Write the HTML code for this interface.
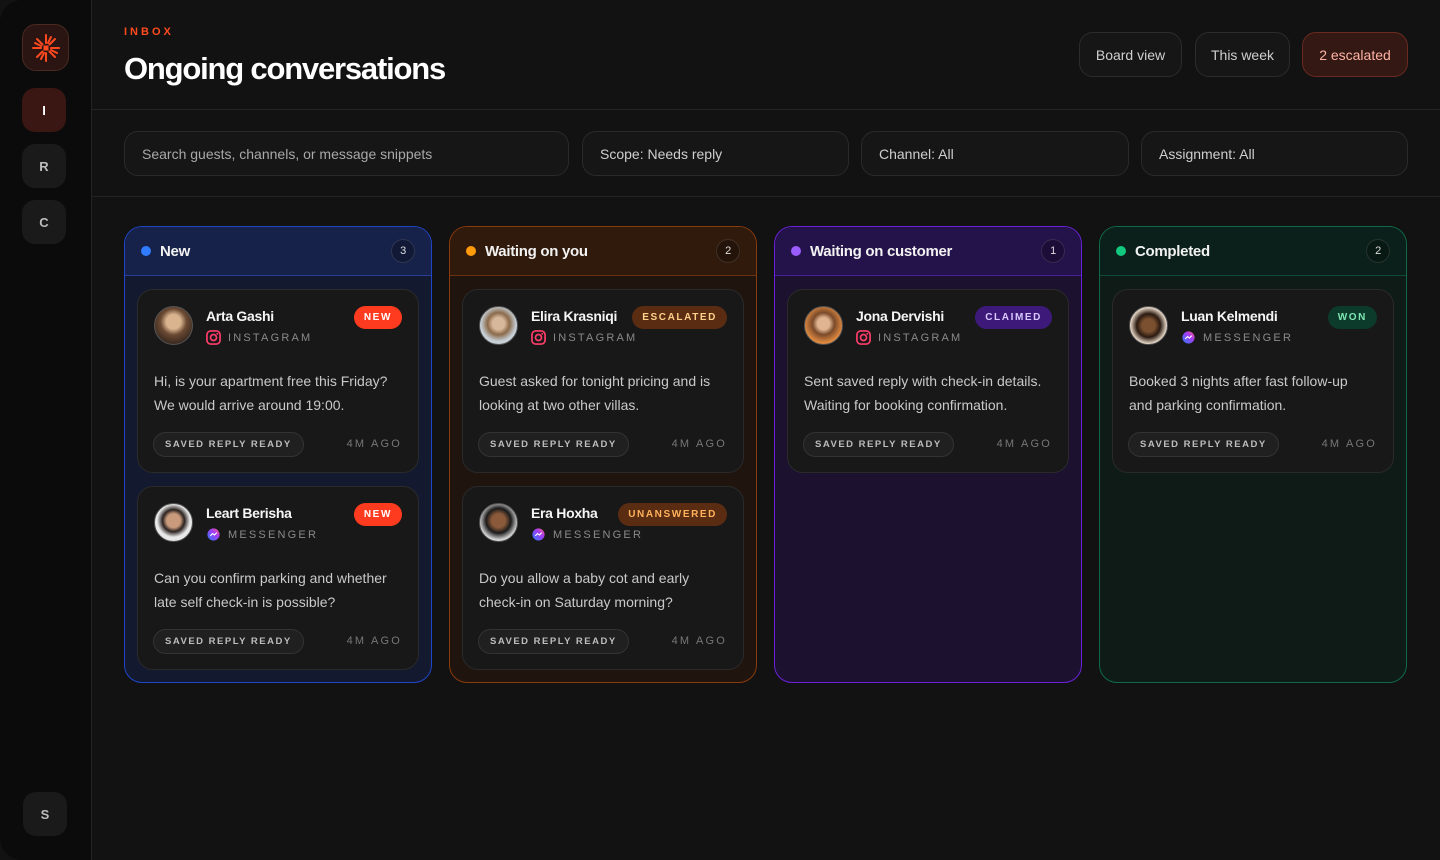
<!DOCTYPE html>
<html><head><meta charset="utf-8"><style>
*{box-sizing:border-box;margin:0;padding:0}
body{width:1440px;height:860px;background:#121212;font-family:"Liberation Sans",sans-serif;color:#f2f2f2;position:relative;overflow:hidden}
.side{position:absolute;left:0;top:0;width:92px;height:860px;background:#0b0b0b;border-right:1px solid #232323;border-radius:22px 0 0 22px}
.sb{position:absolute;left:22px;width:44px;height:44px;border-radius:13px;background:#1a1a1a;color:#bdbdbd;font-size:13px;font-weight:bold;display:flex;align-items:center;justify-content:center}
.logo{position:absolute;left:22px;top:24px;width:47px;height:47px;border-radius:14px;background:#2a1512;border:1px solid #4a2a22;display:flex;align-items:center;justify-content:center}
.kick{position:absolute;left:124px;top:26px;font-size:11px;letter-spacing:3px;color:#ff4a1f;font-weight:bold}
h1{position:absolute;left:124px;top:51px;font-size:31px;font-weight:bold;letter-spacing:-1.2px;color:#fff}
.btn{position:absolute;top:32px;height:45px;border-radius:14px;border:1px solid #2c2c2c;background:#161616;color:#cfcfcf;font-size:14px;display:flex;align-items:center;justify-content:center}
.hr{position:absolute;left:92px;right:0;height:1px;background:#242424}
.f{position:absolute;top:131px;height:45px;border-radius:14px;border:1px solid #2a2a2a;background:#161616;color:#cfcfcf;font-size:14px;display:flex;align-items:center;padding-left:17px}
.col{position:absolute;top:226px;width:308px;height:457px;border-radius:18px;border:1px solid}
.ch{height:49px;border-bottom:1px solid;display:flex;align-items:center;padding:0 16px;font-size:15px;font-weight:bold;letter-spacing:-0.3px;border-radius:17px 17px 0 0}
.dot{width:10px;height:10px;border-radius:50%;margin-right:9px}
.cnt{margin-left:auto;width:24px;height:24px;border-radius:50%;border:1px solid rgba(255,255,255,.12);background:rgba(0,0,0,.25);font-size:11px;font-weight:normal;display:flex;align-items:center;justify-content:center;color:#ddd}
.card{position:absolute;left:12px;width:282px;height:184px;border-radius:16px;background:#181818;border:1px solid #2a2a2a}
.av{position:absolute;left:16px;top:16px;width:39px;height:39px;border-radius:50%;border:1px solid #555}
.nm{position:absolute;left:68px;top:18px;font-size:14px;font-weight:bold;letter-spacing:-0.3px;color:#f5f5f5}
.chn{position:absolute;left:68px;top:40px;font-size:11px;letter-spacing:2.2px;color:#8a8a8a;display:flex;align-items:center}
.ic{width:15px;height:15px;margin-right:7px;display:inline-block}
.bd{position:absolute;right:16px;top:16px;height:23px;border-radius:12px;font-size:10px;letter-spacing:1.6px;font-weight:bold;display:flex;align-items:center;padding:0 10px}
.msg{position:absolute;left:16px;top:79px;width:240px;font-size:14px;line-height:24px;color:#c9c9c9}
.chip{position:absolute;left:15px;top:142px;height:25px;border-radius:13px;border:1px solid #333;background:#202020;font-size:9.5px;letter-spacing:1.5px;font-weight:bold;color:#bdbdbd;display:flex;align-items:center;padding:0 11px}
.ago{position:absolute;right:16px;top:148px;font-size:11px;letter-spacing:2.2px;color:#777}
</style></head><body>
<div class="side">
<div class="logo"><svg width="30" height="30" viewBox="-15 -15 30 30"><g stroke="#ff4a1f" stroke-width="2" stroke-linecap="round"><line x1="0" y1="-5" x2="0" y2="-13"/><line x1="0" y1="5" x2="0" y2="13"/><line x1="-5" y1="0" x2="-13" y2="0"/><line x1="5" y1="0" x2="13" y2="0"/><line x1="3.5" y1="-3.5" x2="9" y2="-9"/><line x1="-3.5" y1="3.5" x2="-9" y2="9"/><line x1="-3.5" y1="-3.5" x2="-9" y2="-9"/><line x1="3.5" y1="3.5" x2="9" y2="9"/><line x1="2" y1="-5" x2="5" y2="-11"/><line x1="-2" y1="5" x2="-5" y2="11"/><line x1="-5" y1="-2" x2="-11" y2="-5"/><line x1="5" y1="2" x2="11" y2="5"/></g><rect x="-2.5" y="-2.5" width="5" height="5" fill="#ff4a1f"/></svg></div>
<div class="sb" style="top:88px;background:#3a1712;color:#fff">I</div>
<div class="sb" style="top:144px">R</div>
<div class="sb" style="top:200px">C</div>
<div class="sb" style="top:792px;left:23px">S</div>
</div>
<div class="kick">INBOX</div>
<h1>Ongoing conversations</h1>
<div class="btn" style="left:1079px;width:103px">Board view</div>
<div class="btn" style="left:1195px;width:95px">This week</div>
<div class="btn" style="left:1302px;width:106px;background:#331814;border-color:#6a2a20;color:#ffb3a3">2 escalated</div>
<div class="hr" style="top:109px"></div>
<div class="f" style="left:124px;width:445px;color:#a9a9a9">Search guests, channels, or message snippets</div>
<div class="f" style="left:582px;width:267px">Scope: Needs reply</div>
<div class="f" style="left:861px;width:268px">Channel: All</div>
<div class="f" style="left:1141px;width:267px">Assignment: All</div>
<div class="hr" style="top:196px"></div>

<div class="col" style="left:124px;background:#131a30;border-color:#2045c8">
<div class="ch" style="background:#17224a;border-color:#2a3f9a"><span class="dot" style="background:#2f7cff"></span>New<span class="cnt">3</span></div>
<div class="card" style="top:62px">
<div class="av" style="background:radial-gradient(circle at 50% 40%,#d9b48f 0 25%,#6b4a33 45%,#3b2a20 75%)"></div>
<div class="nm">Arta Gashi</div>
<div class="chn"><svg class="ic" viewBox="0 0 16 16"><rect x="1" y="1" width="14" height="14" rx="4" fill="none" stroke="#ff3d6a" stroke-width="1.8"/><circle cx="8" cy="8" r="3.2" fill="none" stroke="#ff3d6a" stroke-width="1.8"/><circle cx="12" cy="4" r="1" fill="#ff3d6a"/></svg>INSTAGRAM</div>
<div class="bd" style="background:#ff3b1f;color:#fff">NEW</div>
<div class="msg">Hi, is your apartment free this Friday? We would arrive around 19:00.</div>
<div class="chip">SAVED REPLY READY</div><div class="ago">4M AGO</div>
</div>
<div class="card" style="top:259px">
<div class="av" style="background:radial-gradient(circle at 50% 45%,#c99b7c 0 25%,#2a2220 40%,#e8e8e8 60%)"></div>
<div class="nm">Leart Berisha</div>
<div class="chn"><svg class="ic" viewBox="0 0 16 16"><defs><linearGradient id="m" x1="0" y1="1" x2="1" y2="0"><stop offset="0" stop-color="#2a7bff"/><stop offset=".6" stop-color="#a33cf5"/><stop offset="1" stop-color="#ff5c7a"/></linearGradient></defs><circle cx="8" cy="8" r="6.5" fill="url(#m)"/><path d="M4.5 9.5l2.5-2.5 2 1.5 2.5-2.5" stroke="#fff" stroke-width="1.2" fill="none"/></svg>MESSENGER</div>
<div class="bd" style="background:#ff3b1f;color:#fff">NEW</div>
<div class="msg">Can you confirm parking and whether late self check-in is possible?</div>
<div class="chip">SAVED REPLY READY</div><div class="ago">4M AGO</div>
</div>
</div>

<div class="col" style="left:449px;background:#1f140e;border-color:#8a3a0c">
<div class="ch" style="background:#301a0c;border-color:#6a3010"><span class="dot" style="background:#ff9a0a"></span>Waiting on you<span class="cnt">2</span></div>
<div class="card" style="top:62px">
<div class="av" style="background:radial-gradient(circle at 50% 45%,#d8b89a 0 22%,#8a6a4a 40%,#c7d0d8 65%)"></div>
<div class="nm">Elira Krasniqi</div>
<div class="chn"><svg class="ic" viewBox="0 0 16 16"><rect x="1" y="1" width="14" height="14" rx="4" fill="none" stroke="#ff3d6a" stroke-width="1.8"/><circle cx="8" cy="8" r="3.2" fill="none" stroke="#ff3d6a" stroke-width="1.8"/><circle cx="12" cy="4" r="1" fill="#ff3d6a"/></svg>INSTAGRAM</div>
<div class="bd" style="background:#5a2c12;color:#ffd08a">ESCALATED</div>
<div class="msg">Guest asked for tonight pricing and is looking at two other villas.</div>
<div class="chip">SAVED REPLY READY</div><div class="ago">4M AGO</div>
</div>
<div class="card" style="top:259px">
<div class="av" style="background:radial-gradient(circle at 50% 45%,#8a5a3a 0 25%,#1a1a1a 45%,#d8d8d8 70%)"></div>
<div class="nm">Era Hoxha</div>
<div class="chn"><svg class="ic" viewBox="0 0 16 16"><circle cx="8" cy="8" r="6.5" fill="url(#m)"/><path d="M4.5 9.5l2.5-2.5 2 1.5 2.5-2.5" stroke="#fff" stroke-width="1.2" fill="none"/></svg>MESSENGER</div>
<div class="bd" style="background:#5a2c12;color:#ffb25a">UNANSWERED</div>
<div class="msg">Do you allow a baby cot and early check-in on Saturday morning?</div>
<div class="chip">SAVED REPLY READY</div><div class="ago">4M AGO</div>
</div>
</div>

<div class="col" style="left:774px;background:#1c1230;border-color:#6a22d8">
<div class="ch" style="background:#24124a;border-color:#4a1f9a"><span class="dot" style="background:#9b5cff"></span>Waiting on customer<span class="cnt">1</span></div>
<div class="card" style="top:62px">
<div class="av" style="background:radial-gradient(circle at 50% 45%,#e0b490 0 22%,#7a4a2a 40%,#e08a40 70%)"></div>
<div class="nm">Jona Dervishi</div>
<div class="chn"><svg class="ic" viewBox="0 0 16 16"><rect x="1" y="1" width="14" height="14" rx="4" fill="none" stroke="#ff3d6a" stroke-width="1.8"/><circle cx="8" cy="8" r="3.2" fill="none" stroke="#ff3d6a" stroke-width="1.8"/><circle cx="12" cy="4" r="1" fill="#ff3d6a"/></svg>INSTAGRAM</div>
<div class="bd" style="background:#3d1a7a;color:#d9c8ff">CLAIMED</div>
<div class="msg">Sent saved reply with check-in details. Waiting for booking confirmation.</div>
<div class="chip">SAVED REPLY READY</div><div class="ago">4M AGO</div>
</div>
</div>

<div class="col" style="left:1099px;background:#0f1b17;border-color:#0f6a4a">
<div class="ch" style="background:#0b201a;border-color:#0f4a36"><span class="dot" style="background:#12c77e"></span>Completed<span class="cnt">2</span></div>
<div class="card" style="top:62px">
<div class="av" style="background:radial-gradient(circle at 50% 50%,#7a5030 0 25%,#2a1a10 45%,#ecdccc 70%)"></div>
<div class="nm">Luan Kelmendi</div>
<div class="chn"><svg class="ic" viewBox="0 0 16 16"><circle cx="8" cy="8" r="6.5" fill="url(#m)"/><path d="M4.5 9.5l2.5-2.5 2 1.5 2.5-2.5" stroke="#fff" stroke-width="1.2" fill="none"/></svg>MESSENGER</div>
<div class="bd" style="background:#0c3b2c;color:#7ee6b4">WON</div>
<div class="msg">Booked 3 nights after fast follow-up and parking confirmation.</div>
<div class="chip">SAVED REPLY READY</div><div class="ago">4M AGO</div>
</div>
</div>
</body></html>
